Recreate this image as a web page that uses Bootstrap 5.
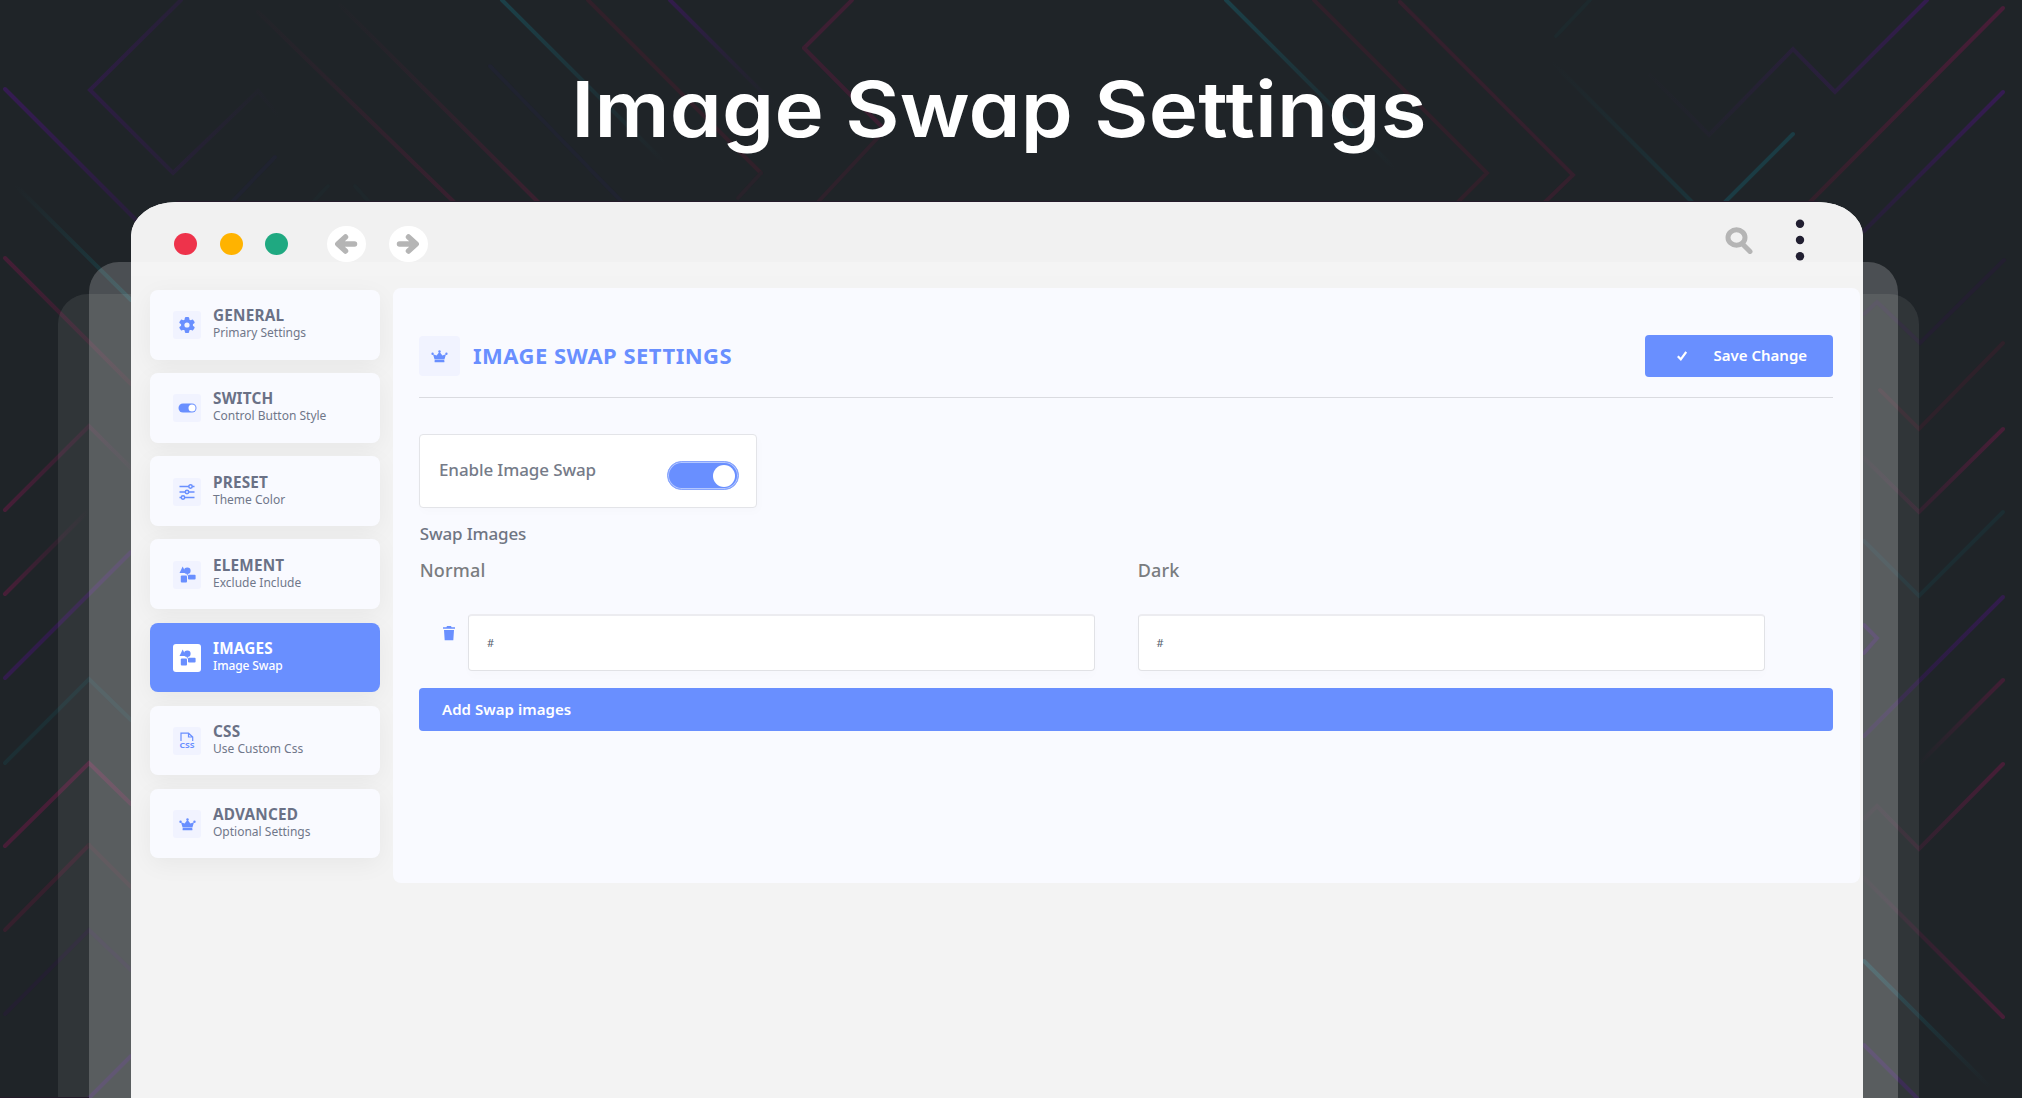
<!DOCTYPE html>
<html lang="en">
<head>
<meta charset="utf-8">
<title>Image Swap Settings</title>
<link href="https://cdn.jsdelivr.net/npm/bootstrap@5.3.0/dist/css/bootstrap.min.css" rel="stylesheet">
<style>
body{width:2022px;height:1098px;overflow:hidden;background:#1f2428;font-family:"Noto Sans","Open Sans",sans-serif;color:#6b7280}
.stage{width:2022px;height:1098px}
.backdrop{left:0;top:0;z-index:0}
.hero{height:202px;padding-top:59px;padding-right:25px;z-index:2}
.hero h1{font-family:Inter,sans-serif;font-feature-settings:"cv11","ss03";font-size:77px;font-weight:600;line-height:100px;color:#fff;letter-spacing:.2px;white-space:nowrap;transform:scaleX(1.083)}
.win{margin-left:131px;width:1732px;height:896px;background:#f3f3f3;border-radius:45px 45px 0 0/34px 34px 0 0;z-index:2;overflow:hidden}
.chrome{height:74px;background:linear-gradient(#f1f1f1 60px,#f4f4f4 60px);padding:10px 58px 0 43px}
.dot{width:23px;height:22px;border-radius:50%}
.dot-red{background:#ee334b}
.dot-amber{background:#ffb300}
.dot-green{background:#1fa981}
.dots{gap:22.5px}
.arrows{gap:23px;margin-left:38.5px}
.tools{gap:42.5px;margin-top:-8px}
.nav-dot{width:39px;height:36px;border-radius:50%;background:#fff}
.side{width:230px;gap:13.45px;margin-left:19px;margin-top:14px}
.tab{height:69.7px;border-radius:8px;background:#f9faff;padding-left:23px;gap:12px;box-shadow:0 6px 24px rgba(0,0,0,.05)}
.tab .ico{width:28px;height:28px;border-radius:3px;background:#f1f3ff;margin-top:1px}
.tab b{font-size:15.3px;line-height:17px;font-weight:700;color:#6a7186;letter-spacing:.2px}
.tab span{font-size:12px;line-height:18px;color:#70778a}
.tab.on{background:#698fff}
.tab.on .ico{background:#fff}
.tab.on b,.tab.on span{color:#fff}
.tab.on span{font-weight:500;letter-spacing:-.1px}
.panel{width:1467px;height:595px;margin:12px 0 0 13px;border-radius:8px;background:#f9faff;padding:48px 27px 0 26px}
.head{height:62px;border-bottom:1px solid #dadbe0;padding-bottom:21px}
.head .ico{width:41px;height:40px;border-radius:4px;background:#f1f3ff}
.head h2{font-size:22px;line-height:40px;font-weight:700;color:#698fff;margin-left:13px;letter-spacing:.48px;padding-bottom:2px}
.save{width:188px;height:42px;border-radius:4px;background:#698fff;color:#fff;font-weight:600;font-size:15px;padding:0 0 1px 32px;gap:26.5px}
.enable{width:338px;height:74px;margin-top:36px;background:#fff;border:1px solid #e3e4e8;border-radius:4px;padding:0 17px 0 19px;font-size:17px;font-weight:500;color:#757b88;box-shadow:2px 4px 10px rgba(0,0,0,.015)}
.enable span{letter-spacing:-.12px;padding-bottom:2px}
.toggle{width:72px;height:29px;border-radius:15px;background:#698fff;border:1px solid #88a5fd;box-shadow:inset 0 0 0 1px #b4c7ff;margin-top:9px;padding-right:3px}
.toggle i{width:22px;height:22px;border-radius:50%;background:#fff}
.lab{font-size:17px;line-height:24px;font-weight:500;color:#6f7583;margin-top:14px;letter-spacing:-.15px;padding-left:.7px}
.cols{font-size:18px;line-height:26px;font-weight:500;color:#7a7c80;margin-top:11px;letter-spacing:.2px;padding-left:.7px}
.cols div{width:718px}
.fields{margin-top:31px;gap:42.5px}
.bin{width:49px;padding:12px 0 0 24px}
.inp{width:627px;height:57px;border:1px solid #e1e2e6;border-top:2px solid #ececf0;border-radius:4px;background:#fff;font-size:11px;padding-left:18px;color:#555c6b;box-shadow:0 6px 8px rgba(0,0,0,.012)}
.add{height:43px;margin-top:17px;border-radius:4px;background:#698fff;color:#fff;font-size:15px;font-weight:600;letter-spacing:.05px;padding:0 0 1px 23px}
</style>
</head>
<body>
<svg width="0" height="0" class="position-absolute">
<defs>
<symbol id="crown" viewBox="0 0 18 14"><path d="M3.700 10.200 2 4.700 5.900 6 9 1.800 12.100 6 16 4.700l-1.700 5.500z"/><rect x="3.700" y="10.900" width="10.600" height="2.400" rx=".6"/><circle cx="9" cy="1.500" r="1.300"/><circle cx="1.500" cy="4" r="1.300"/><circle cx="16.500" cy="4" r="1.300"/></symbol>
<symbol id="shapes" viewBox="0 0 17 17"><path d="M3.700.6 7 7H.5z"/><circle cx="8.300" cy="4.800" r="3.300"/><path d="M7.500 8.200h1.800l-.8 1.500z"/><rect x="1.800" y="9.600" width="6.200" height="6.800" rx="1"/><rect x="9" y="8.700" width="7.600" height="4.800" rx="1"/></symbol>
</defs>
</svg>
<main class="stage position-relative">
<svg class="backdrop position-absolute" width="2022" height="1098" fill="none" stroke-width="4" stroke-linecap="round">
<defs>
<linearGradient id="t1" gradientUnits="userSpaceOnUse" x1="502" y1="0" x2="665" y2="163"><stop stop-color="#1b4048"/><stop offset="1" stop-color="#1b4048" stop-opacity="0"/></linearGradient>
<linearGradient id="t2" gradientUnits="userSpaceOnUse" x1="1226" y1="0" x2="1395" y2="169"><stop stop-color="#1b4048"/><stop offset="1" stop-color="#1b4048" stop-opacity="0"/></linearGradient>
<linearGradient id="t3" gradientUnits="userSpaceOnUse" x1="1692" y1="202" x2="1552" y2="62"><stop stop-color="#1b3339"/><stop offset="1" stop-color="#1b3339" stop-opacity="0"/></linearGradient>
<linearGradient id="t4" gradientUnits="userSpaceOnUse" x1="131" y1="300" x2="15" y2="185"><stop stop-color="#1b3c42"/><stop offset="1" stop-color="#1b3c42" stop-opacity="0"/></linearGradient>
<linearGradient id="t5" gradientUnits="userSpaceOnUse" x1="1864" y1="961" x2="1990" y2="1087"><stop stop-color="#1b3f46"/><stop offset="1" stop-color="#1b4048" stop-opacity="0"/></linearGradient>
<linearGradient id="p1" gradientUnits="userSpaceOnUse" x1="90" y1="90" x2="280" y2="100"><stop stop-color="#2d1d43"/><stop offset="1" stop-color="#2d1d43" stop-opacity="0"/></linearGradient>
<linearGradient id="p2" gradientUnits="userSpaceOnUse" x1="5" y1="89" x2="136" y2="220"><stop stop-color="#351b52"/><stop offset="1" stop-color="#281e3a"/></linearGradient>
<linearGradient id="p3" gradientUnits="userSpaceOnUse" x1="670" y1="0" x2="775" y2="105"><stop stop-color="#321c4c"/><stop offset="1" stop-color="#2d1d43" stop-opacity="0"/></linearGradient>
<linearGradient id="p4" gradientUnits="userSpaceOnUse" x1="1927" y1="0" x2="1640" y2="75"><stop stop-color="#331c4e"/><stop offset="1" stop-color="#2d1d43" stop-opacity="0"/></linearGradient>
<linearGradient id="p5" gradientUnits="userSpaceOnUse" x1="2003" y1="92" x2="1864" y2="231"><stop stop-color="#351b52"/><stop offset="1" stop-color="#251f36"/></linearGradient>
<linearGradient id="p6" gradientUnits="userSpaceOnUse" x1="5" y1="0" x2="131" y2="0"><stop stop-color="#321c4c"/><stop offset="1" stop-color="#2a1c42"/></linearGradient>
<linearGradient id="p7" gradientUnits="userSpaceOnUse" x1="2003" y1="0" x2="1864" y2="0"><stop stop-color="#321c4c"/><stop offset="1" stop-color="#271d3c"/></linearGradient>
<linearGradient id="r1" gradientUnits="userSpaceOnUse" x1="454" y1="202" x2="238" y2="-8"><stop stop-color="#38202f"/><stop offset="1" stop-color="#38202f" stop-opacity="0"/></linearGradient>
<linearGradient id="r2" gradientUnits="userSpaceOnUse" x1="538" y1="202" x2="330" y2="-5"><stop stop-color="#3a202f"/><stop offset="1" stop-color="#38202f" stop-opacity="0"/></linearGradient>
<linearGradient id="r3" gradientUnits="userSpaceOnUse" x1="2003" y1="8" x2="1810" y2="202"><stop stop-color="#481d38"/><stop offset="1" stop-color="#33202b"/></linearGradient>
<linearGradient id="r4" gradientUnits="userSpaceOnUse" x1="5" y1="258" x2="131" y2="384"><stop stop-color="#451e36"/><stop offset="1" stop-color="#2c2129"/></linearGradient>
<linearGradient id="r5" gradientUnits="userSpaceOnUse" x1="5" y1="0" x2="131" y2="0"><stop stop-color="#471e37"/><stop offset="1" stop-color="#471e37" stop-opacity=".1"/></linearGradient>
<linearGradient id="r6" gradientUnits="userSpaceOnUse" x1="2003" y1="0" x2="1864" y2="0"><stop stop-color="#471e37"/><stop offset="1" stop-color="#471e37" stop-opacity=".1"/></linearGradient>
<linearGradient id="r7" gradientUnits="userSpaceOnUse" x1="2003" y1="0" x2="1919" y2="0"><stop stop-color="#401e34"/><stop offset="1" stop-color="#471e37" stop-opacity="0"/></linearGradient>
<linearGradient id="r8" gradientUnits="userSpaceOnUse" x1="5" y1="0" x2="89" y2="0"><stop stop-color="#471e37"/><stop offset="1" stop-color="#471e37" stop-opacity="0"/></linearGradient>
<linearGradient id="r9" gradientUnits="userSpaceOnUse" x1="5" y1="0" x2="131" y2="0"><stop stop-color="#471e37"/><stop offset=".65" stop-color="#471e37"/><stop offset="1" stop-color="#3a1f31"/></linearGradient>
</defs>
<path stroke="url(#p1)" d="M181 0 90 90l83 83 85-82 20 24"/>
<path stroke="url(#r1)" d="M258 12 454 202"/><path stroke="url(#r2)" d="M340 5 538 202"/>
<path stroke="url(#p2)" d="M5 89 136 220"/><path stroke="url(#t4)" d="M15 185 131 300"/><path stroke="url(#r4)" d="M5 258 131 384"/>
<path stroke="url(#t1)" d="M502 0 665 163"/><path stroke="#31202a" d="M588 0 761 173"/><path stroke="#28222a" d="M761 173 738 198"/>
<path stroke="url(#p3)" d="M670 0 775 105"/><path stroke="#3d1f33" d="M852 0 804 48"/><path stroke="#3a1f31" d="M804 48 885 130"/><path stroke="#2e212b" d="M885 130 818 202"/>
<path stroke="#202330" d="M490 66 622 202M232 202 275 157"/><path stroke="#1e272b" d="M313 202 328 186M355 186 369 202"/>
<path stroke="url(#t2)" d="M1226 0 1395 169"/><path stroke="#30202a" d="M1314 0 1487 173 1458 202"/><path stroke="#34202d" d="M1400 2 1573 175 1545 202"/>
<path stroke="#1d292d" d="M1590 0 1556 36"/><path stroke="url(#t3)" d="M1552 62 1692 202"/><path stroke="#1b3c44" d="M1725 202 1793 134"/>
<path stroke="url(#p4)" d="M1927 0 1835 92 1793 49 1709 135 1650 75"/>
<path stroke="url(#r3)" d="M2003 8 1810 202"/><path stroke="url(#p5)" d="M2003 92 1864 231"/>
<path stroke="#231f30" d="M2004 260 1920 343 1877 302 1864 314"/>
<path stroke="#2e212a" d="M2003 343 1919 429 1880 390"/>
<path stroke="url(#r6)" d="M2003 429 1919 512 1864 458"/>
<path stroke="#1c2d32" d="M2003 512 1919 596 1864 541"/>
<path stroke="#2c1c46" d="M1864 625 1877 638 1864 653"/><path stroke="url(#p7)" d="M2003 597 1864 736"/>
<path stroke="url(#r7)" d="M2003 680 1919 764"/><path stroke="url(#r6)" d="M2003 764 1919 849 1877 806 1864 819M2003 1017 1864 878"/>
<path stroke="url(#t5)" d="M1864 961 1990 1087"/><path stroke="#2c1c46" d="M1864 1045 1917 1098"/>
<path stroke="url(#r5)" d="M5 510 89 426 131 468"/><path stroke="url(#r8)" d="M5 594 89 510"/>
<path stroke="url(#p6)" d="M5 678 131 552"/><path stroke="#2a1c42" d="M89 1098 131 1056"/>
<path stroke="#1c2f34" d="M5 763 89 679 131 720"/>
<path stroke="url(#r9)" d="M5 846 89 763 131 804"/><path stroke="#35202d" d="M5 930 89 845"/><path stroke="#2b2229" d="M89 845 131 887"/>
<path stroke="#231f30" d="M5 1014 89 930 131 970"/>
<path fill="#fff" fill-opacity=".08" d="M58 1098V324a30 30 0 0 1 30-30H1889a30 30 0 0 1 30 30V1098z"/>
<path fill="#fff" fill-opacity=".2" d="M89 1098V292a30 30 0 0 1 30-30H1868a30 30 0 0 1 30 30V1098z"/>
<path fill="#241b2a" d="M0 1097h89v1H0zM176 201h1642v1H176z"/>
</svg>

<header class="hero position-relative d-flex justify-content-center align-items-start"><h1 class="m-0">Image Swap Settings</h1></header>

<section class="win position-relative">
  <div class="chrome d-flex align-items-center">
    <div class="dots d-flex align-items-center">
      <span class="dot dot-red"></span><span class="dot dot-amber"></span><span class="dot dot-green"></span>
    </div>
    <div class="arrows d-flex">
      <span class="nav-dot d-flex align-items-center justify-content-center"><svg width="24" height="22" viewBox="0 0 24 22" fill="none" stroke="#b5b5b5" stroke-width="5.500" stroke-linecap="round" stroke-linejoin="round"><path d="M11.500 4 3.800 11l7.700 7M5 11h15.500"/></svg></span>
      <span class="nav-dot d-flex align-items-center justify-content-center"><svg width="24" height="22" viewBox="0 0 24 22" fill="none" stroke="#b5b5b5" stroke-width="5.500" stroke-linecap="round" stroke-linejoin="round"><path d="M12.500 4l7.700 7-7.700 7M19 11H3.500"/></svg></span>
    </div>
    <div class="tools ms-auto d-flex align-items-center">
      <svg width="28" height="28" viewBox="0 0 28 28" fill="none" stroke="#b5b5b5" stroke-width="5" stroke-linecap="round"><ellipse cx="11.500" cy="11.500" rx="8.500" ry="7.700"/><path d="M18 18.500 25 25.500"/></svg>
      <svg width="10" height="42" viewBox="0 0 10 42" fill="#211f31"><circle cx="5" cy="4.700" r="4.200"/><circle cx="5" cy="21" r="4.200"/><circle cx="5" cy="37.300" r="4.200"/></svg>
    </div>
  </div>

  <div class="d-flex align-items-start">
    <nav class="side d-flex flex-column">
      <div class="tab d-flex align-items-center"><div class="ico d-flex align-items-center justify-content-center"><svg width="16" height="16" viewBox="-8 -8 16 16"><g fill="#698fff"><circle r="6"/><rect x="-2.200" y="-8" width="4.400" height="16" rx="1.200"/><rect x="-2.200" y="-8" width="4.400" height="16" rx="1.200" transform="rotate(60)"/><rect x="-2.200" y="-8" width="4.400" height="16" rx="1.200" transform="rotate(120)"/></g><circle r="2.600" fill="#f1f3ff"/></svg></div><div class="d-flex flex-column align-items-start"><b>GENERAL</b><span>Primary Settings</span></div></div>
      <div class="tab d-flex align-items-center"><div class="ico d-flex align-items-center justify-content-center"><svg width="19" height="10" viewBox="0 0 19 10"><rect x=".5" y=".5" width="18" height="9" rx="4.500" fill="#698fff"/><circle cx="14" cy="5" r="3.500" fill="#fff"/></svg></div><div class="d-flex flex-column align-items-start"><b>SWITCH</b><span>Control Button Style</span></div></div>
      <div class="tab d-flex align-items-center"><div class="ico d-flex align-items-center justify-content-center"><svg width="16" height="16" viewBox="0 0 16 16" fill="#f1f3ff" stroke="#698fff" stroke-width="1.500"><path d="M.5 2.500h15M.5 8h15M.5 13.500h15"/><circle cx="11.500" cy="2.500" r="1.700"/><circle cx="8" cy="8" r="1.700"/><circle cx="4" cy="13.500" r="1.700"/></svg></div><div class="d-flex flex-column align-items-start"><b>PRESET</b><span>Theme Color</span></div></div>
      <div class="tab d-flex align-items-center"><div class="ico d-flex align-items-center justify-content-center"><svg width="17" height="17" fill="#698fff"><use href="#shapes"/></svg></div><div class="d-flex flex-column align-items-start"><b>ELEMENT</b><span>Exclude Include</span></div></div>
      <div class="tab on d-flex align-items-center"><div class="ico d-flex align-items-center justify-content-center"><svg width="17" height="17" fill="#698fff"><use href="#shapes"/></svg></div><div class="d-flex flex-column align-items-start"><b>IMAGES</b><span>Image Swap</span></div></div>
      <div class="tab d-flex align-items-center"><div class="ico d-flex align-items-center justify-content-center"><svg width="16" height="17" viewBox="0 0 16 17"><path d="M2 9V1.200h7.500L13.700 5v4M9.500 1.200V5h4.200" fill="none" stroke="#698fff" stroke-width="1.200"/><text x="8" y="16" text-anchor="middle" textLength="15" lengthAdjust="spacingAndGlyphs" font-size="7.500" font-weight="700" fill="#698fff">CSS</text></svg></div><div class="d-flex flex-column align-items-start"><b>CSS</b><span>Use Custom Css</span></div></div>
      <div class="tab d-flex align-items-center"><div class="ico d-flex align-items-center justify-content-center"><svg width="17" height="13" fill="#698fff"><use href="#crown"/></svg></div><div class="d-flex flex-column align-items-start"><b>ADVANCED</b><span>Optional Settings</span></div></div>
    </nav>

    <div class="panel">
      <div class="head d-flex align-items-center">
        <div class="ico d-flex align-items-center justify-content-center"><svg width="17" height="13" viewBox="0 0 18 14" fill="#698fff"><use href="#crown" width="18" height="14"/></svg></div>
        <h2 class="mb-0">IMAGE SWAP SETTINGS</h2>
        <button class="save btn border-0 ms-auto d-flex align-items-center"><svg width="10" height="10" viewBox="0 0 10 10" fill="none" stroke="#fff" stroke-width="2.200"><path d="M.8 5.300 3.800 8.300 9.200 1"/></svg><span>Save Change</span></button>
      </div>
      <div class="enable d-flex align-items-center justify-content-between"><span>Enable Image Swap</span><div class="toggle d-flex align-items-center justify-content-end"><i></i></div></div>
      <div class="lab">Swap Images</div>
      <div class="cols d-flex"><div class="flex-shrink-0">Normal</div><div>Dark</div></div>
      <div class="fields d-flex">
        <div class="d-flex">
          <div class="bin d-flex align-items-start"><svg width="12" height="15" viewBox="0 0 12 15" fill="#698fff"><path d="M4 0h4l.6 1.200H12v1.600H0V1.200h3.400zM1 4h10l-.7 10.200H1.700z"/></svg></div>
          <div class="inp d-flex align-items-center">#</div>
        </div>
        <div class="inp d-flex align-items-center">#</div>
      </div>
      <div class="add d-flex align-items-center">Add Swap images</div>
    </div>
  </div>
</section>
</main>
<script src="https://cdn.jsdelivr.net/npm/bootstrap@5.3.0/dist/js/bootstrap.bundle.min.js"></script>
</body>
</html>
